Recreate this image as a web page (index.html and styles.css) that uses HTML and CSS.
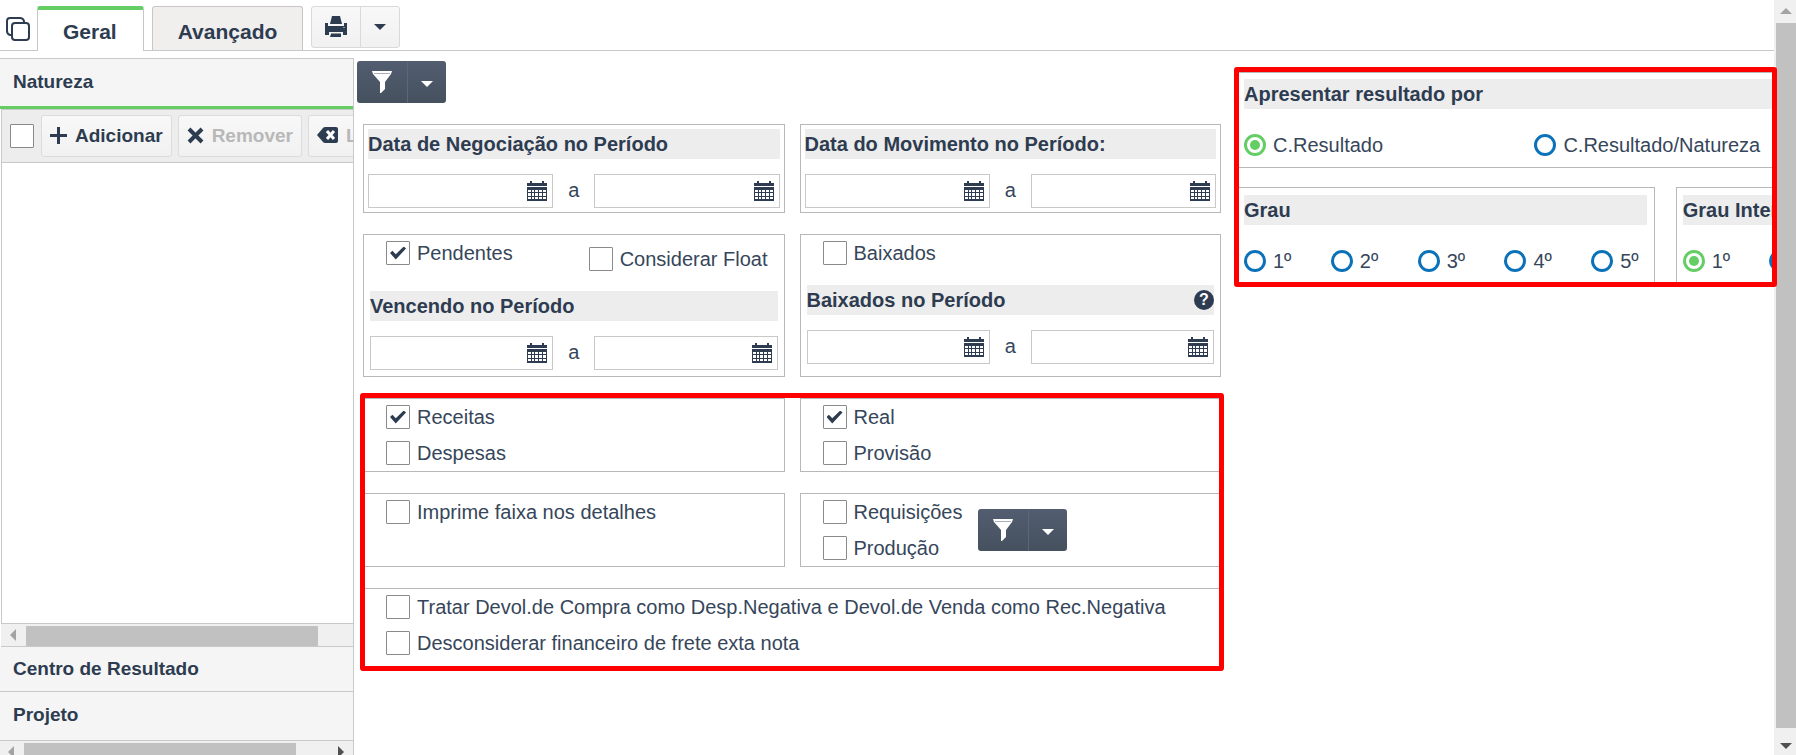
FILE: index.html
```html
<!DOCTYPE html>
<html lang="pt-BR">
<head>
    <meta charset="UTF-8">
    <meta name="viewport" content="width=device-width, initial-scale=1.0">
    <title>Geral</title>
    <link rel="stylesheet" href="styles.css">
</head>
<body>
    <svg class="sprite" aria-hidden="true">
        <symbol id="calendar" viewBox="0 0 20 20">
            <path fill="currentColor" d="M0 2h3V0h2v2h10V0h2v2h3v3H0z"/>
            <path fill="currentColor" fill-rule="evenodd" d="M0 6h20v14H0zM1 9v2h3V9zm4 0v2h2V9zm3 0v2h3V9zm4 0v2h3V9zm4 0v2h3V9zM1 12v3h3v-3zm4 0v3h2v-3zm3 0v3h3v-3zm4 0v3h3v-3zm4 0v3h3v-3zM1 16v2h3v-2zm4 0v2h2v-2zm3 0v2h3v-2zm4 0v2h3v-2zm4 0v2h3v-2z"/>
        </symbol>
        <symbol id="funnel" viewBox="0 0 20 22">
            <path fill="#fff" d="M0 0h20l-1 3-6 8v7l-4 4h-1V11L1 3z"/>
            <path stroke="#a9b0b9" d="M2 2.500h16"/>
        </symbol>
        <symbol id="caret" viewBox="0 0 12 6">
            <path fill="currentColor" d="M0 0h12L6 6z"/>
        </symbol>
    </svg>

    <div class="app">
        <header class="tabs">
            <button class="copy" type="button" aria-label="Duplicar">
                <svg width="24" height="24" viewBox="0 0 24 24" fill="none" stroke="currentColor" stroke-width="2">
                    <rect x="6" y="6" width="17" height="17" rx="3"/>
                    <path d="M5 18H4Q1 17 1 14V4Q1 1 4 1h10q3 0 4 3v1"/>
                </svg>
            </button>
            <button class="tab active" type="button">Geral</button>
            <button class="tab" type="button">Avançado</button>
            <div class="split light">
                <button type="button" aria-label="Imprimir">
                    <svg width="22" height="22" viewBox="0 0 22 22">
                        <path fill="currentColor" d="M7 0h8l2 8H5z"/>
                        <path fill="currentColor" d="M0 7h3v3h16V7h3v12h-4v-3H4v3H0z"/>
                        <path fill="currentColor" d="M6 18h10v3H5z"/>
                        <path fill="#8c979c" d="M6 17h10v1H6zM18 11h2v1h-2z"/>
                    </svg>
                </button>
                <button type="button" aria-label="Opções de impressão"><svg class="caret"><use href="#caret"/></svg></button>
            </div>
        </header>

        <div class="body">
            <aside class="sidebar">
                <h2 class="accordion open">Natureza</h2>
                <div class="list">
                    <div class="list-tools">
                        <input type="checkbox" aria-label="Selecionar todos">
                        <button type="button">
                            <svg width="17" height="17" viewBox="0 0 17 17"><path stroke="currentColor" stroke-width="3" d="M0 8.500h17M8.500 0v17"/></svg>
                            Adicionar
                        </button>
                        <button type="button" class="off">
                            <svg width="17" height="17" viewBox="0 0 17 17"><path stroke="currentColor" stroke-width="4" d="M2 2l13 13M15 2L2 15"/></svg>
                            Remover
                        </button>
                        <button type="button" class="off">
                            <svg width="21" height="16" viewBox="0 0 21 16">
                                <path fill="currentColor" d="M0 8l6-7q1-1 2-1h11q2 0 2 2v12q0 2-2 2H8q-1 0-2-1z"/>
                                <path stroke="#fff" stroke-width="3" d="M10 4l7 8M17 4l-7 8"/>
                            </svg>
                            Limpar
                        </button>
                    </div>
                    <div class="list-rows"></div>
                </div>
                <div class="hscroll">
                    <i class="arrow left"></i>
                    <span class="thumb"></span>
                    <i class="arrow"></i>
                </div>
                <h2 class="accordion">Centro de Resultado</h2>
                <h2 class="accordion last">Projeto</h2>
                <div class="hscroll cut">
                    <i class="arrow left"></i>
                    <span class="thumb"></span>
                    <i class="arrow right"></i>
                </div>
            </aside>

            <main class="content">
                <div class="filters">
                    <div class="split dark">
                        <button type="button" aria-label="Filtrar"><svg class="funnel"><use href="#funnel"/></svg></button>
                        <button type="button" aria-label="Opções do filtro"><svg class="caret"><use href="#caret"/></svg></button>
                    </div>

                    <div class="fields">
                        <section class="box dates">
                            <h3>Data de Negociação no Período</h3>
                            <div class="range">
                                <div class="date"><input type="text" aria-label="Negociação de"><button type="button" aria-label="Calendário"><svg><use href="#calendar"/></svg></button></div>
                                <span>a</span>
                                <div class="date"><input type="text" aria-label="Negociação até"><button type="button" aria-label="Calendário"><svg><use href="#calendar"/></svg></button></div>
                            </div>
                        </section>
                        <section class="box dates">
                            <h3>Data do Movimento no Período:</h3>
                            <div class="range">
                                <div class="date"><input type="text" aria-label="Movimento de"><button type="button" aria-label="Calendário"><svg><use href="#calendar"/></svg></button></div>
                                <span>a</span>
                                <div class="date"><input type="text" aria-label="Movimento até"><button type="button" aria-label="Calendário"><svg><use href="#calendar"/></svg></button></div>
                            </div>
                        </section>

                        <section class="box status">
                            <div class="checks pair">
                                <label><input type="checkbox" checked> Pendentes</label>
                                <label class="low"><input type="checkbox"> Considerar Float</label>
                            </div>
                            <h3>Vencendo no Período</h3>
                            <div class="range">
                                <div class="date"><input type="text" aria-label="Vencendo de"><button type="button" aria-label="Calendário"><svg><use href="#calendar"/></svg></button></div>
                                <span>a</span>
                                <div class="date"><input type="text" aria-label="Vencendo até"><button type="button" aria-label="Calendário"><svg><use href="#calendar"/></svg></button></div>
                            </div>
                        </section>
                        <section class="box status">
                            <div class="checks">
                                <label><input type="checkbox"> Baixados</label>
                            </div>
                            <h3>Baixados no Período <button class="help" type="button">?</button></h3>
                            <div class="range">
                                <div class="date"><input type="text" aria-label="Baixados de"><button type="button" aria-label="Calendário"><svg><use href="#calendar"/></svg></button></div>
                                <span>a</span>
                                <div class="date"><input type="text" aria-label="Baixados até"><button type="button" aria-label="Calendário"><svg><use href="#calendar"/></svg></button></div>
                            </div>
                        </section>
                    </div>

                    <div class="fields marked">
                        <section class="box checks">
                            <label><input type="checkbox" checked> Receitas</label>
                            <label><input type="checkbox"> Despesas</label>
                        </section>
                        <section class="box checks">
                            <label><input type="checkbox" checked> Real</label>
                            <label><input type="checkbox"> Provisão</label>
                        </section>
                        <section class="box checks">
                            <label><input type="checkbox"> Imprime faixa nos detalhes</label>
                        </section>
                        <section class="box with-filter">
                            <div class="checks">
                                <label><input type="checkbox"> Requisições</label>
                                <label><input type="checkbox"> Produção</label>
                            </div>
                            <div class="split dark">
                                <button type="button" aria-label="Filtrar produção"><svg class="funnel"><use href="#funnel"/></svg></button>
                                <button type="button" aria-label="Opções do filtro"><svg class="caret"><use href="#caret"/></svg></button>
                            </div>
                        </section>
                        <section class="box checks wide">
                            <label><input type="checkbox"> Tratar Devol.de Compra como Desp.Negativa e Devol.de Venda como Rec.Negativa</label>
                            <label><input type="checkbox"> Desconsiderar financeiro de frete exta nota</label>
                        </section>
                    </div>
                </div>

                <div class="results">
                    <section class="result-by">
                        <h3>Apresentar resultado por</h3>
                        <div class="radios halves">
                            <label><input type="radio" name="resultado" checked> C.Resultado</label>
                            <label><input type="radio" name="resultado"> C.Resultado/Natureza</label>
                        </div>
                    </section>
                    <div class="degrees">
                        <section class="degree">
                            <h3>Grau</h3>
                            <div class="radios">
                                <label><input type="radio" name="grau"> 1º</label>
                                <label><input type="radio" name="grau"> 2º</label>
                                <label><input type="radio" name="grau"> 3º</label>
                                <label><input type="radio" name="grau"> 4º</label>
                                <label><input type="radio" name="grau"> 5º</label>
                            </div>
                        </section>
                        <section class="degree">
                            <h3>Grau Intermediário</h3>
                            <div class="radios">
                                <label><input type="radio" name="inter" checked> 1º</label>
                                <label><input type="radio" name="inter"> 2º</label>
                                <label><input type="radio" name="inter"> 3º</label>
                                <label><input type="radio" name="inter"> 4º</label>
                                <label><input type="radio" name="inter"> 5º</label>
                            </div>
                        </section>
                    </div>
                </div>
            </main>
        </div>
    </div>

    <div class="vscroll">
        <i class="arrow up"></i>
        <span class="thumb"></span>
        <i class="arrow down"></i>
    </div>
</body>
</html>
```
FILE: styles.css
```css
:root {
    --ink: #2d3c50;
    --text: #36465a;
    --line: #c9c9c9;
    --box-line: #b8b8b8;
    --green: #64cd64;
    --blue: #0b72b9;
    --mark: #ff0000;
}

* {
    box-sizing: border-box;
}

body {
    margin: 0;
    height: 100vh;
    display: flex;
    overflow: hidden;
    background: #fff;
    color: var(--text);
    font-family: "Liberation Sans", Arial, sans-serif;
    font-size: 20px;
    line-height: 24px;
}

button,
input {
    font: inherit;
    color: var(--ink);
    margin: 0;
}

button {
    padding: 0;
    cursor: pointer;
}

h2,
h3 {
    margin: 0;
    color: var(--ink);
    font-size: 20px;
    white-space: nowrap;
}

.sprite {
    position: absolute;
    width: 0;
    height: 0;
}

.app {
    flex: 1;
    min-width: 0;
    display: flex;
    flex-direction: column;
}

/* tabs */
.tabs {
    display: flex;
    align-items: flex-start;
    height: 51px;
    padding-top: 6px;
    border-bottom: 1px solid var(--line);
}

.copy {
    display: flex;
    width: 37px;
    padding: 11px 0 0 6px;
    border: 0;
    background: none;
}

.tab {
    height: 44px;
    margin-right: 8px;
    padding: 6px 25px 0;
    border: 1px solid #c9c5c5;
    border-bottom: 0;
    border-radius: 3px 3px 0 0;
    background: #f1efee;
    font-size: 21px;
    font-weight: bold;
}

.tab.active {
    height: 45px;
    padding: 2px 26px 0 25px;
    border-top: 4px solid var(--green);
    background: #fff;
}

.split {
    display: inline-flex;
    height: 42px;
    border-radius: 3px;
}

.split button {
    display: flex;
    align-items: center;
    justify-content: center;
    width: 38px;
    border: 0;
    background: none;
}

.split button:first-child {
    width: 51px;
}

.split.light {
    border: 1px solid #d9d9d9;
    background: linear-gradient(#f8f8f8, #f1f1f1);
}

.split.light button:first-child {
    width: 49px;
    border-right: 1px solid #d9d9d9;
}

.split.dark {
    background: linear-gradient(#525e70, #45515e);
}

.split.dark button {
    color: #fff;
}

.split.dark button:first-child {
    border-right: 1px solid #5c687a;
}

.split.dark .caret {
    margin-top: 4px;
}

.caret {
    width: 12px;
    height: 6px;
}

.funnel {
    width: 20px;
    height: 22px;
}

/* sidebar */
.body {
    flex: 1;
    min-height: 0;
    display: grid;
    grid-template-columns: 354fr 1420fr;
}

.sidebar {
    min-width: 0;
    margin-top: 7px;
    display: flex;
    flex-direction: column;
    overflow: hidden;
    border: solid var(--line);
    border-width: 1px 1px 0 0;
}

.accordion {
    padding: 10px 13px;
    border-bottom: 1px solid var(--line);
    background: #f5f5f5;
    font-size: 19px;
}

.accordion.open {
    padding: 11px 13px 12px;
    border-bottom: 3px solid var(--green);
}

.accordion.last {
    padding: 11px 13px 13px;
}

.list {
    flex: 1;
    display: flex;
    flex-direction: column;
    margin-left: 1px;
    border: solid var(--line);
    border-width: 1px 0 1px 1px;
}

.list-tools {
    display: flex;
    align-items: center;
    gap: 6px;
    padding: 5px 0 5px 8px;
    border-bottom: 1px solid var(--line);
    background: #ededed;
}

.list-tools input {
    margin-right: 1px;
}

.list-tools button {
    flex: none;
    display: flex;
    align-items: center;
    gap: 8px;
    height: 42px;
    padding: 0 8px;
    border: 1px solid #dcdcdc;
    border-radius: 3px;
    background: linear-gradient(#f8f8f8, #f1f1f1);
    font-size: 19px;
    font-weight: bold;
}

.list-tools .off {
    color: #b8b8b8;
}

.list-tools svg {
    margin-bottom: 2px;
    color: var(--ink);
}

.list-rows {
    flex: 1;
}

/* scrollbars */
.hscroll {
    flex: none;
    display: flex;
    align-items: center;
    height: 23px;
    margin-left: 1px;
    padding-left: 9px;
    border-bottom: 1px solid var(--line);
    background: #f0f0f0;
}

.hscroll .thumb {
    width: 85%;
    height: 20px;
    margin: 2px auto 0 10px;
    background: #c1c1c1;
}

.hscroll.cut {
    align-items: flex-start;
    height: 14px;
    margin-left: 0;
    padding: 0 9px 0 8px;
    overflow: hidden;
    border: 0;
}

.hscroll.cut .arrow {
    margin-top: 5px;
}

.hscroll.cut .thumb {
    width: 81%;
}

.arrow {
    width: 0;
    height: 0;
    border: 6px solid transparent;
}

.arrow.left {
    border-left: 0;
    border-right-color: #a3a3a3;
}

.arrow.right {
    border-right: 0;
    border-left-color: #505050;
}

.arrow.up {
    border-top: 0;
    border-bottom-color: #a3a3a3;
}

.arrow.down {
    border-bottom: 0;
    border-top-color: #505050;
}

.vscroll {
    flex: none;
    display: flex;
    flex-direction: column;
    align-items: center;
    width: 22px;
    padding: 8px 0 6px 2px;
    background: #f0f0f0;
}

.vscroll .thumb {
    flex: 1;
    width: 100%;
    margin: 9px 0 15px;
    background: #c1c1c1;
}

/* form controls */
input[type="checkbox"],
input[type="radio"] {
    appearance: none;
    flex: none;
    display: grid;
    place-items: center;
    background: #fff;
}

input[type="checkbox"] {
    width: 24px;
    height: 24px;
    border: 1px solid #8a8a8a;
    border-radius: 1px;
}

input[type="checkbox"]:checked::before {
    content: "";
    width: 16px;
    height: 13px;
    background: var(--ink);
    clip-path: polygon(0 50%, 15% 33%, 36% 60%, 86% 0, 100% 16%, 36% 100%);
}

input[type="radio"] {
    width: 22px;
    height: 22px;
    border: 3px solid var(--blue);
    border-radius: 50%;
}

input[type="radio"]:checked {
    border-color: var(--green);
}

input[type="radio"]:checked::before {
    content: "";
    width: 10px;
    height: 10px;
    border-radius: 50%;
    background: var(--green);
}

label {
    display: flex;
    align-items: center;
    gap: 7px;
    white-space: nowrap;
}

/* main form */
.content {
    min-width: 0;
    display: grid;
    grid-template-columns: 867fr 543fr;
    gap: 13px;
    align-items: start;
    margin-right: -3px;
}

.filters {
    padding: 10px 0 0 3px;
}

.filters > .split {
    display: flex;
    width: max-content;
}

.fields {
    display: grid;
    grid-template-columns: 1fr 1fr;
    gap: 21px 15px;
    margin: 21px 0 0 6px;
}

.box {
    min-width: 0;
    padding: 6px;
    border: 1px solid var(--box-line);
}

.box.dates {
    padding: 4px;
}

h3 {
    display: flex;
    align-items: center;
    justify-content: space-between;
    height: 30px;
    background: #ededed;
}

.range {
    display: flex;
    margin-top: 15px;
}

.range span {
    width: 41px;
    padding-top: 4px;
    text-align: center;
}

.date {
    flex: 1;
    min-width: 0;
    display: flex;
    align-items: center;
    height: 34px;
    padding-right: 5px;
    border: 1px solid var(--line);
}

.date input {
    flex: 1;
    min-width: 0;
    height: 100%;
    border: 0;
    outline: 0;
}

.date button {
    display: flex;
    border: 0;
    background: none;
}

.date svg {
    width: 20px;
    height: 20px;
}

.checks {
    display: flex;
    flex-direction: column;
    gap: 12px;
    padding-left: 16px;
}

.box.checks {
    padding-left: 22px;
}

.status .checks {
    margin-bottom: 20px;
}

.checks.pair {
    flex-direction: row;
    align-items: flex-start;
    justify-content: space-between;
    height: 30px;
    padding-right: 10px;
}

.low {
    align-self: flex-end;
}

.help {
    width: 20px;
    height: 20px;
    border: 0;
    border-radius: 50%;
    background: var(--ink);
    color: #fff;
    font-size: 16px;
    font-weight: bold;
    line-height: 20px;
}

.with-filter {
    display: flex;
    align-items: center;
    gap: 16px;
}

.wide {
    grid-column: 1 / -1;
    padding-bottom: 12px;
}

/* red frame over the marked options */
.marked {
    position: relative;
}

.marked::after {
    content: "";
    position: absolute;
    inset: -5px -3px -3px;
    border: 5px solid var(--mark);
    border-radius: 3px;
    pointer-events: none;
}

/* results */
.results {
    position: relative;
    z-index: 1;
    min-width: 0;
    margin-top: 16px;
    overflow: hidden;
    border: 5px solid var(--mark);
    border-radius: 3px;
}

.result-by {
    padding: 6px 0 11px 5px;
    border: solid var(--box-line);
    border-width: 1px 0;
}

.radios {
    display: flex;
    justify-content: space-between;
    margin-top: 25px;
    padding-right: 8px;
}

.radios label {
    height: 22px;
}

.halves {
    display: grid;
    grid-template-columns: 55% 45%;
    padding: 0;
}

.degrees {
    display: flex;
    gap: 21px;
    margin-top: 19px;
}

.degree {
    flex: 0 0 78%;
    padding: 7px 7px 10px 6px;
    border: 1px solid var(--box-line);
    border-bottom: 0;
}

.degree:first-child {
    padding-left: 5px;
    border-left: 0;
}
```
